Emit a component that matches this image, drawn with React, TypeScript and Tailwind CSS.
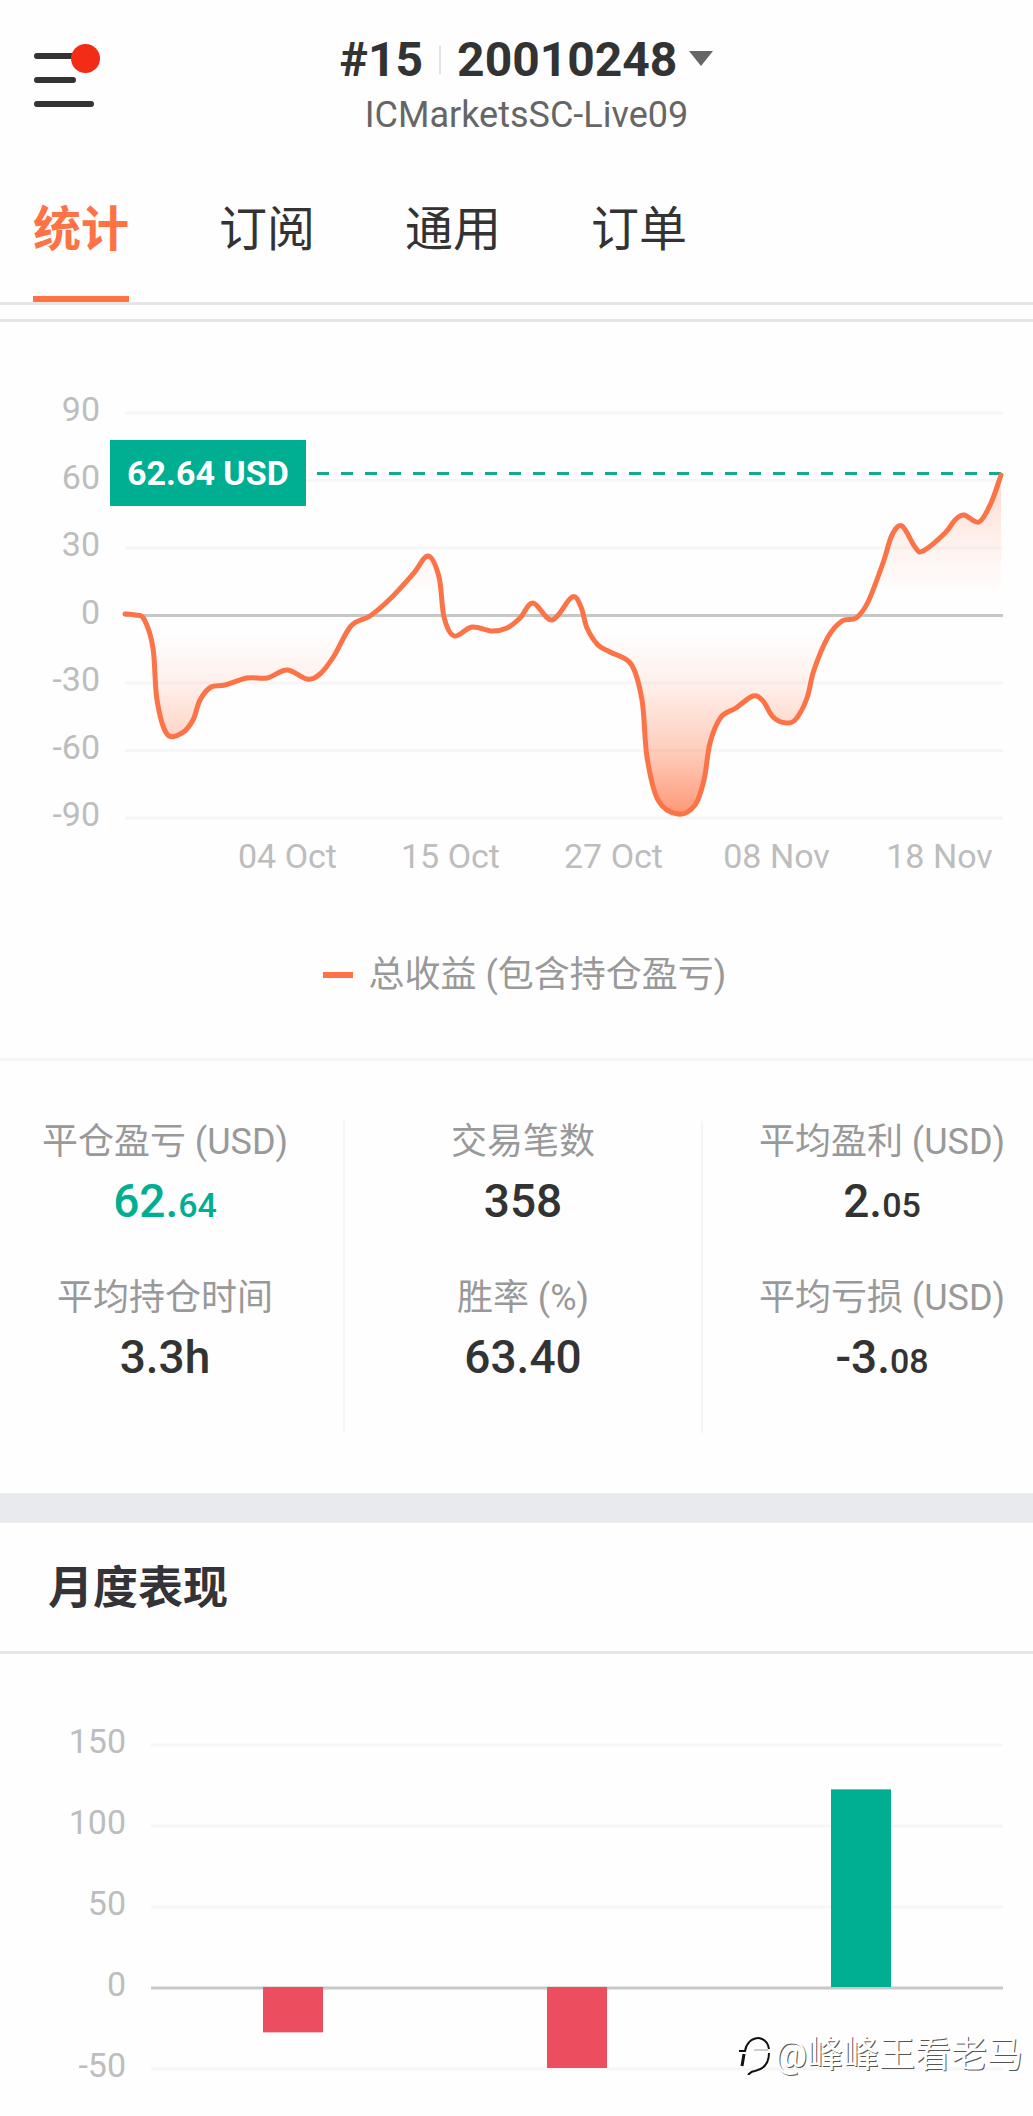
import clsx from 'clsx';

type Point = [number, number];

type StatType = {
  label: string;
  value: string;
  decimals?: string;
  positive?: boolean;
};

const tabs = ['统计', '订阅', '通用', '订单'];

const stats: StatType[][] = [
  [
    { label: '平仓盈亏 (USD)', value: '62.', decimals: '64', positive: true },
    { label: '平均持仓时间', value: '3.3h' },
  ],
  [
    { label: '交易笔数', value: '358' },
    { label: '胜率 (%)', value: '63.40' },
  ],
  [
    { label: '平均盈利 (USD)', value: '2.', decimals: '05' },
    { label: '平均亏损 (USD)', value: '-3.', decimals: '08' },
  ],
];

const profitTicks = [90, 60, 30, 0, -30, -60, -90];
const profitDates = ['04 Oct', '15 Oct', '27 Oct', '08 Nov', '18 Nov'];
const monthlyTicks = [150, 100, 50, 0, -50];
const monthly = [-28, -50, 122];

// total profit, in chart units (878 x 405)
const profit: Point[] = [
  [0, 201], [10, 202], [19, 206], [28, 235], [32, 287], [42, 321], [57, 320],
  [68, 307], [75, 287], [86, 274], [100, 272], [122, 265], [142, 265],
  [162, 257], [182, 266], [195, 261], [209, 243], [226, 213], [245, 203],
  [266, 185], [288, 161], [303, 143], [314, 164], [319, 204], [329, 223],
  [347, 214], [367, 218], [382, 215], [395, 205], [408, 190], [427, 207],
  [447, 184], [456, 194], [462, 215], [473, 232], [485, 239], [506, 251],
  [517, 287], [522, 344], [533, 387], [553, 401], [570, 392], [579, 367],
  [585, 330], [596, 304], [611, 295], [628, 283], [638, 288], [648, 304],
  [661, 310], [671, 306], [682, 285], [689, 257], [703, 224], [717, 208],
  [731, 205], [743, 189], [758, 150], [767, 122], [777, 113], [790, 134],
  [798, 138], [820, 120], [830, 107], [839, 102], [854, 109], [866, 90],
  [876, 62],
];

const smoothPath = (points: Point[]) =>
  points.reduce((path, [x, y], i) => {
    if (i === 0) {
      return `M${x} ${y}`;
    }
    const [ax, ay] = points[Math.max(i - 2, 0)];
    const [bx, by] = points[i - 1];
    const [dx, dy] = points[Math.min(i + 1, points.length - 1)];
    return `${path}C${bx + (x - ax) / 6} ${by + (y - ay) / 6} ${
      x - (dx - bx) / 6
    } ${y - (dy - by) / 6} ${x} ${y}`;
  }, '');

const Header = () => (
  <header className="flex items-start pt-9 pl-[34px] pr-20">
    <button type="button" aria-label="菜单" className="mt-2 shrink-0">
      <svg width="66" height="64" viewBox="0 0 66 64" fill="none">
        <path
          d="M3 12h54M3 36h36M3 60h54"
          stroke="#333"
          strokeWidth="6"
          strokeLinecap="round"
        />
        <circle cx="51.5" cy="14.5" r="14.5" fill="#f22c17" />
      </svg>
    </button>
    <div className="flex flex-1 flex-col items-center">
      <button
        type="button"
        className="flex items-center text-[48px] leading-[48px] font-bold text-[#333]"
      >
        <span>#15</span>
        <span className="mx-4 h-7 w-[2px] bg-[#e5e5e5]" />
        <span>20010248</span>
        <svg className="mb-1 ml-3" width="24" height="15" viewBox="0 0 24 15">
          <path d="M0 0h24L12 15z" fill="#666" />
        </svg>
      </button>
      <p className="mt-2 text-[36px] leading-[46px] text-[#666]">
        ICMarketsSC-Live09
      </p>
    </div>
  </header>
);

const Tabs = () => (
  <nav className="mt-[54px] flex gap-[90px] border-b-[3px] border-[#e5e5e5] pl-[33px]">
    {tabs.map((tab, i) => (
      <button
        key={tab}
        type="button"
        className={clsx(
          'h-[110px] border-b-[6px] pb-7 text-[48px] leading-[70px]',
          i === 0
            ? 'border-[#ff7243] font-bold text-[#ff7243]'
            : 'border-transparent text-[#333]'
        )}
      >
        {tab}
      </button>
    ))}
  </nav>
);

const TickLabels = ({ ticks }: { ticks: number[] }) => (
  <>
    {ticks.map((tick) => (
      <span key={tick}>{tick}</span>
    ))}
  </>
);

const ProfitChart = () => {
  const line = smoothPath(profit);
  return (
    <section className="border-b-[3px] border-[#f5f5f5] pt-[67px] pb-[58px]">
      <div className="relative flex pr-[30px]">
        <div className="flex h-[445px] w-[100px] shrink-0 flex-col justify-between text-right text-[34px] leading-10 text-[#bdbdbd]">
          <TickLabels ticks={profitTicks} />
        </div>
        <svg
          className="mt-6 ml-[25px] h-[405px] min-w-0 flex-1 overflow-visible"
          viewBox="0 0 878 405"
          preserveAspectRatio="none"
          fill="none"
        >
          <defs>
            <linearGradient
              id="profitFill"
              gradientUnits="userSpaceOnUse"
              x1="0"
              y1="0"
              x2="0"
              y2="405"
            >
              <stop offset="0" stopColor="#ff7243" stopOpacity="0.5" />
              <stop offset="0.16" stopColor="#ff7243" stopOpacity="0.26" />
              <stop offset="0.33" stopColor="#ff7243" stopOpacity="0.08" />
              <stop offset="0.45" stopColor="#ff7243" stopOpacity="0" />
              <stop offset="0.54" stopColor="#ff7243" stopOpacity="0" />
              <stop offset="0.67" stopColor="#ff7243" stopOpacity="0.1" />
              <stop offset="0.84" stopColor="#ff7243" stopOpacity="0.36" />
              <stop offset="1" stopColor="#ff7243" stopOpacity="0.75" />
            </linearGradient>
          </defs>
          {profitTicks.map((tick, i) => (
            <path
              key={tick}
              d={`M0 ${i * 67.5}H878`}
              stroke={tick === 0 ? '#c6c8c8' : '#f6f6f6'}
              strokeWidth="3"
            />
          ))}
          <path d={`${line}V201H0z`} fill="url(#profitFill)" />
          <path
            d="M192 60.5H878"
            stroke="#14a98c"
            strokeWidth="3"
            strokeDasharray="12 12"
          />
          <path
            d={line}
            stroke="#fb7346"
            strokeWidth="5"
            strokeLinecap="round"
            strokeLinejoin="round"
          />
        </svg>
        <div className="absolute top-[51px] left-[110px] bg-[#00ae92] px-[17px] text-[34px] leading-[66px] font-bold text-white">
          62.64 USD
        </div>
      </div>
      <div className="mr-3 ml-[206px] grid grid-cols-5 text-center text-[34px] leading-[44px] text-[#bdbdbd]">
        {profitDates.map((date) => (
          <span key={date}>{date}</span>
        ))}
      </div>
      <div className="mt-[72px] flex items-center justify-center gap-4 pl-4 text-[36px] leading-[50px] text-[#999]">
        <span className="h-[6px] w-[30px] bg-[#ff7243]" />
        <span>总收益 (包含持仓盈亏)</span>
      </div>
    </section>
  );
};

const Stat = ({ label, value, decimals, positive }: StatType) => (
  <div className="h-[156px] text-center">
    <dt className="text-[36px] leading-[42px] text-[#999]">
      {label}
    </dt>
    <dd
      className={clsx(
        'mt-2 text-[46px] leading-[60px] font-medium',
        positive ? 'text-[#00ae92]' : 'text-[#333]'
      )}
    >
      {value}
      {decimals && <span className="text-[34px]">{decimals}</span>}
    </dd>
  </div>
);

const Stats = () => (
  <section className="overflow-hidden pt-[60px] pb-[60px]">
    <div className="-mr-[28px] -ml-[13px] grid grid-cols-3 divide-x-2 divide-[#f5f5f5]">
      {stats.map((column) => (
        <dl key={column[0].label}>
          {column.map((stat) => (
            <Stat key={stat.label} {...stat} />
          ))}
        </dl>
      ))}
    </div>
  </section>
);

const MonthlyChart = () => (
  <section className="border-t-[30px] border-[#e9eaee]">
    <h2 className="border-b-[3px] border-[#e5e5e5] pt-1 pl-12 text-[45px] leading-[124px] font-bold text-[#333338]">
      月度表现
    </h2>
    <div className="flex pt-[67px] pr-[30px] pb-[31px]">
      <div className="flex h-[364px] w-[126px] shrink-0 flex-col justify-between text-right text-[34px] leading-10 text-[#bdbdbd]">
        <TickLabels ticks={monthlyTicks} />
      </div>
      <svg
        className="mt-6 ml-[25px] h-[324px] min-w-0 flex-1 overflow-visible"
        viewBox="0 0 852 324"
        preserveAspectRatio="none"
        fill="none"
      >
        {monthlyTicks.map((tick, i) => (
          <path
            key={tick}
            d={`M0 ${i * 81}H852`}
            stroke={tick === 0 ? '#c8c8c8' : '#f6f6f6'}
            strokeWidth="3"
          />
        ))}
        {monthly.map((value, i) => (
          <rect
            key={value}
            x={112 + i * 284}
            y={value > 0 ? 242 - value * 1.62 : 242}
            width="60"
            height={Math.abs(value) * 1.62}
            fill={value > 0 ? '#00ae92' : '#ec4e5f'}
          />
        ))}
      </svg>
    </div>
  </section>
);

const Watermark = () => (
  <div className="absolute right-[10px] bottom-9 flex items-center gap-1 text-[36px] leading-[50px] text-white [text-shadow:1px_1px_0_#555]">
    <svg width="32" height="40" viewBox="0 0 32 40" fill="none" stroke="#111">
      <path d="M0 16h6C7 9 12 3 20 3" strokeWidth="2" />
      <path d="M5 19 3 31" strokeWidth="3" />
      <path d="M20 3c5 1 9 5 10 11" strokeWidth="2" />
      <path d="M15 15h14" strokeWidth="1" stroke="#999" />
      <path d="M30 18c0 10-5 16-14 18-4 0-5 2-7 4" strokeWidth="2" />
    </svg>
    <span>@峰峰王看老马</span>
  </div>
);

const App = () => (
  <div className="relative overflow-hidden bg-[#fefefe] font-['Roboto','Noto_Sans_CJK_SC',sans-serif]">
    <Header />
    <Tabs />
    <main className="mt-[14px] border-t-[3px] border-[#e5e5e5]">
      <ProfitChart />
      <Stats />
      <MonthlyChart />
    </main>
    <Watermark />
  </div>
);

export default App;
